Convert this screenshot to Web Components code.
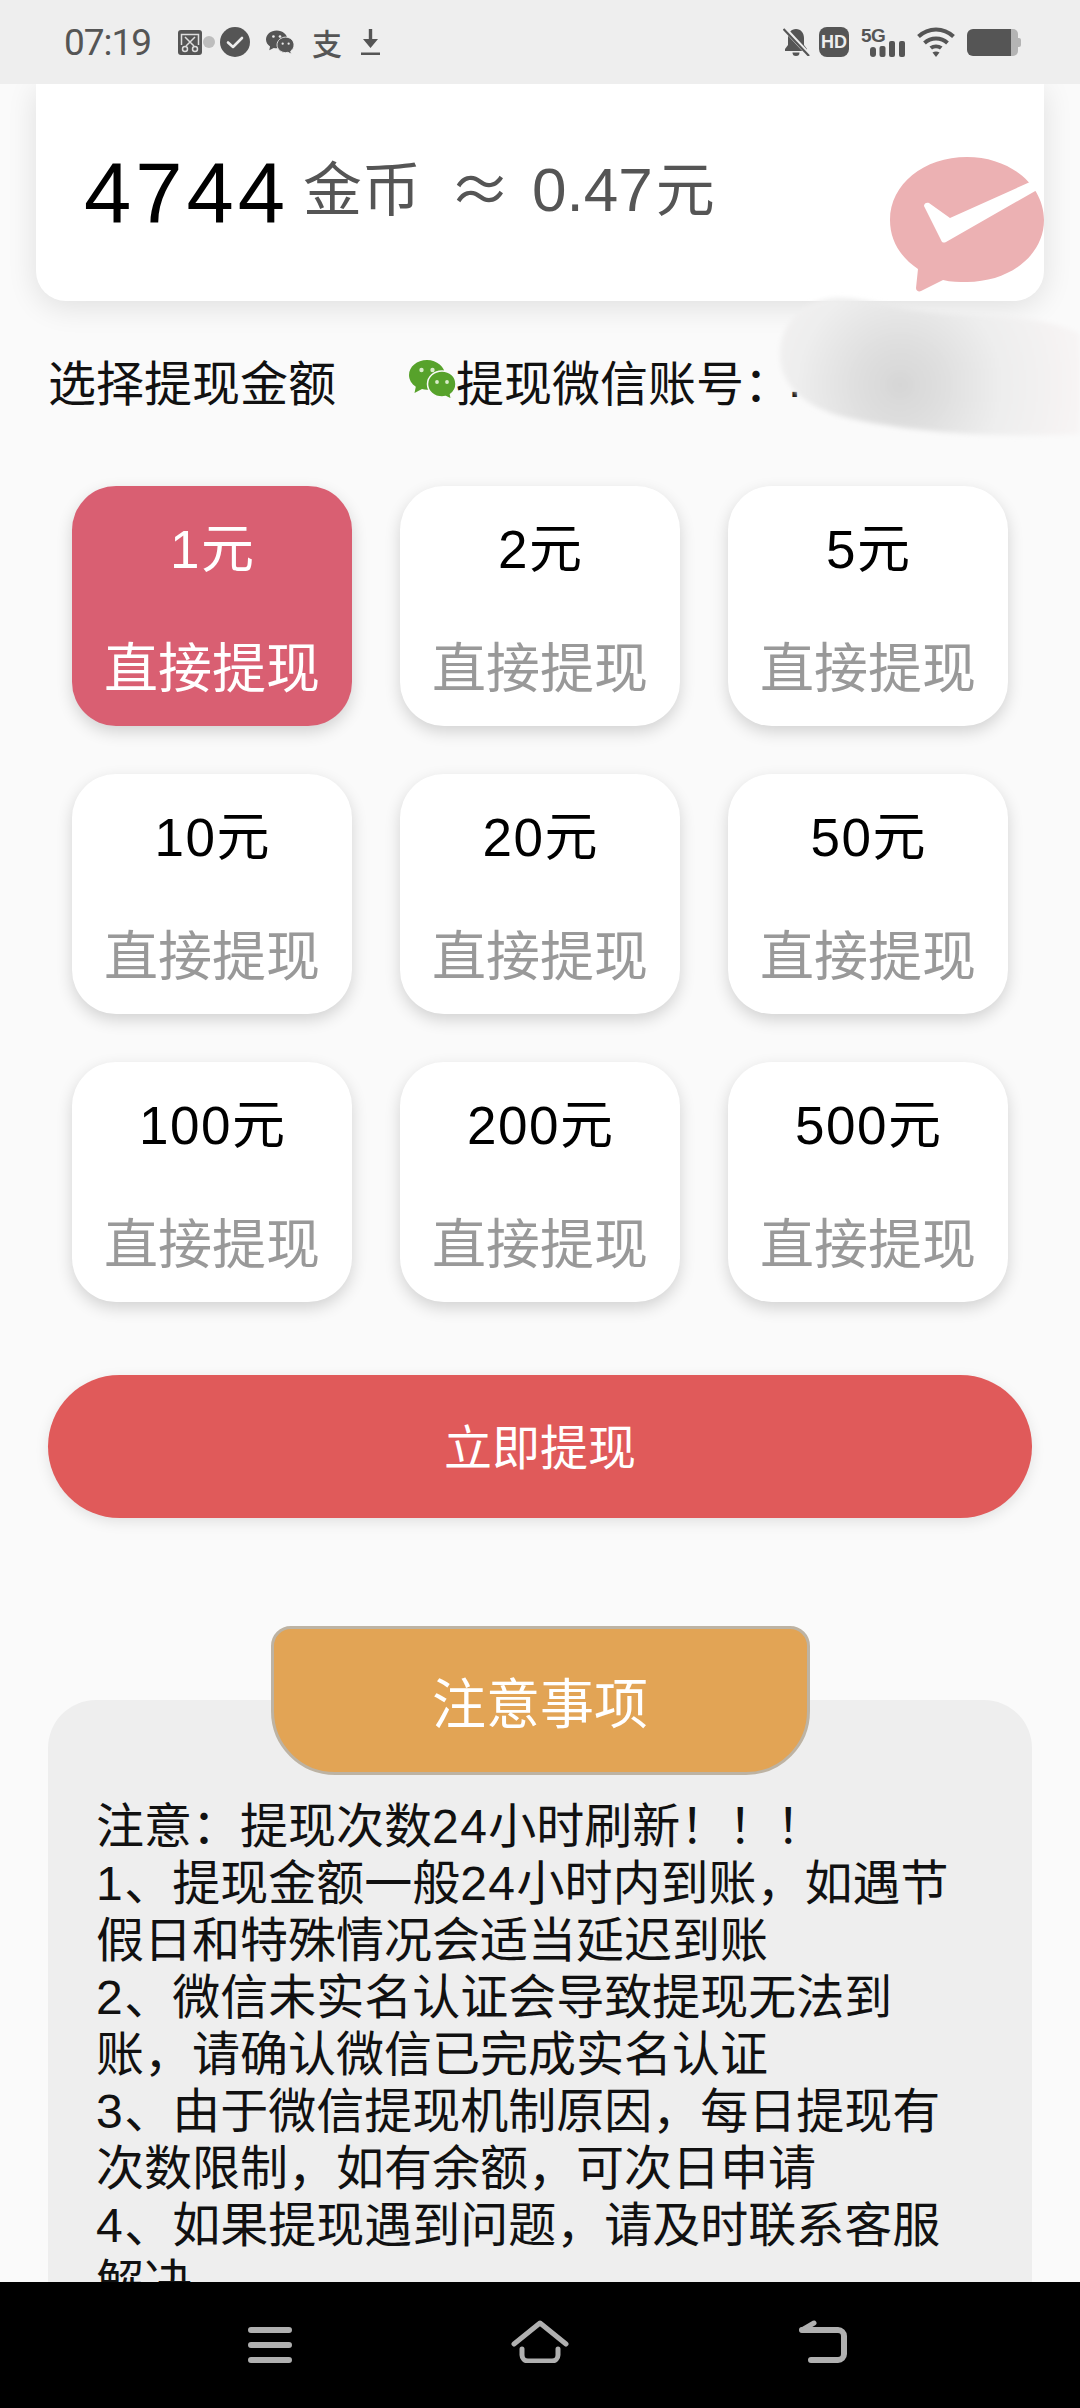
<!DOCTYPE html>
<html lang="zh-CN">
<head>
<meta charset="utf-8">
<title>提现</title>
<style>
  html, body { margin: 0; height: 100%; background: #fafafa; }
  body { font-family: "Noto Sans CJK SC", "Liberation Sans", sans-serif; text-autospace: no-autospace; }
</style>
</head>
<body>
<withdraw-page>
  <status-bar slot="status"></status-bar>

  <balance-card>
    <x-num class="coins">4744</x-num>
  </balance-card>

  <account-row>
    <span slot="left">选择提现金额</span>
    <span slot="right">提现微信账号：</span>
  </account-row>

  <amount-grid>
    <amount-card selected><x-num>1</x-num>元</amount-card>
    <amount-card><x-num>2</x-num>元</amount-card>
    <amount-card><x-num>5</x-num>元</amount-card>
    <amount-card><x-num>10</x-num>元</amount-card>
    <amount-card><x-num>20</x-num>元</amount-card>
    <amount-card><x-num>50</x-num>元</amount-card>
    <amount-card><x-num>100</x-num>元</amount-card>
    <amount-card><x-num>200</x-num>元</amount-card>
    <amount-card><x-num>500</x-num>元</amount-card>
  </amount-grid>

  <withdraw-button>立即提现</withdraw-button>

  <notice-panel>
    <span slot="title">注意事项</span>
    注意：提现次数<x-num>24</x-num>小时刷新！！！<br>
    <x-num>1</x-num>、提现金额一般<x-num>24</x-num>小时内到账，如遇节假日和特殊情况会适当延迟到账<br>
    <x-num>2</x-num>、微信未实名认证会导致提现无法到账，请确认微信已完成实名认证<br>
    <x-num>3</x-num>、由于微信提现机制原因，每日提现有次数限制，如有余额，可次日申请<br>
    <x-num>4</x-num>、如果提现遇到问题，请及时联系客服解决
  </notice-panel>

  <nav-bar slot="nav"></nav-bar>
</withdraw-page>

<script>
// Digits in the reference run a little wider than Liberation Sans.
// line-height 0 stops the second font from stretching the CJK line boxes.
// No whitespace around the slot: this is an inline host, it would show as a space.
class XNum extends HTMLElement {
  constructor() {
    super();
    const shadow = this.attachShadow({ mode: "open" });
    shadow.innerHTML = `<style>
      :host {
        display: inline;
        font-family: "Liberation Sans", sans-serif;
        letter-spacing: 0.03em;
        line-height: 0;
      }
      </style><slot></slot>`;
  }
}
customElements.define("x-num", XNum);

class WechatIcon extends HTMLElement {
  constructor() {
    super();
    const shadow = this.attachShadow({ mode: "open" });
    shadow.innerHTML = `
      <style>
      :host { display: inline-flex; }
      svg { width: 100%; height: 100%; display: block; }
      </style>
      <svg viewBox="0 0 47 40">
        <path fill="currentColor" d="M18 0C8 0 0 6.700 0 15c0 4.800 2.700 9 6.800 11.700L5.500 33l7.500-3.900c1.600.4 3.300.6 5 .6C28 29.700 36 23 36 15S28 0 18 0z"/>
        <path fill="currentColor" stroke="var(--cut, #fafafa)" stroke-width="1.500" d="M33 11c-8 0-14.500 5.700-14.500 13S25 37 33 37c1.300 0 2.500-.2 3.700-.5l5.800 3-1-5.200c3.400-2.400 5.500-6 5.500-10.300 0-7.300-6-13-14-13z"/>
        <g fill="var(--eye, #d9ecc9)">
          <circle cx="12.500" cy="10" r="2.200"/><circle cx="23.500" cy="10" r="2.200"/>
          <circle cx="28" cy="22" r="1.900"/><circle cx="38" cy="22" r="1.900"/>
        </g>
      </svg>`;
  }
}
customElements.define("wechat-icon", WechatIcon);

class StatusBar extends HTMLElement {
  constructor() {
    super();
    const shadow = this.attachShadow({ mode: "open" });
    shadow.innerHTML = `
      <style>
      :host {
        display: flex;
        align-items: center;
        justify-content: space-between;
        height: 84px;
        padding: 0 59px 0 64px;
        box-sizing: border-box;
        background: #eeeeee;
        color: #555;
        position: relative;
        z-index: 2;
      }
      .group { display: flex; align-items: center; }
      .time {
        width: 88px;
        font: 37px/1 Roboto, sans-serif;
        letter-spacing: -1px;
        margin-right: 26px;
        white-space: nowrap;
      }
      svg { display: block; flex: none; }
      .dot { width: 12px; height: 12px; border-radius: 50%; background: #bdbdbd; margin: 0 5px 0 1px; }
      wechat-icon { width: 28px; height: 25px; margin-left: 16px; --cut: #eee; --eye: #eee; }
      .ali {
        width: 28px;
        margin-left: 18px;
        font: 500 30px/1 "Noto Sans CJK SC", sans-serif;
        text-align: center;
      }
      .down { margin-left: 21px; }
      .hd {
        width: 30px;
        height: 30px;
        margin-left: 9px;
        border-radius: 8px;
        background: #555;
        color: #eee;
        font: bold 18px/30px "Liberation Sans", sans-serif;
        text-align: center;
      }
      .net { width: 44px; height: 30px; margin-left: 12px; position: relative; }
      .net b { position: absolute; left: 0; top: -1px; font: bold 19px/19px "Liberation Sans", sans-serif; letter-spacing: -0.500px; }
      .net svg { position: absolute; left: 0; top: 0; }
      .wifi { margin-left: 12px; }
      .batt { margin-left: 12px; }
      </style>
      <div class="group">
        <span class="time">07:19</span>
        <svg width="24" height="25" viewBox="0 0 24 25">
          <rect width="24" height="25" rx="3" fill="#555"/>
          <path d="M3.500 15V4.500h17V15" fill="none" stroke="#ddd" stroke-width="1.500"/>
          <path d="M7 7l9 9M17 7l-9 9" fill="none" stroke="#ddd" stroke-width="1.500"/>
          <circle cx="7" cy="19" r="2.500" fill="none" stroke="#ddd" stroke-width="1.500"/>
          <circle cx="17" cy="19" r="2.500" fill="none" stroke="#ddd" stroke-width="1.500"/>
        </svg>
        <span class="dot"></span>
        <svg width="30" height="30" viewBox="0 0 30 30">
          <circle cx="15" cy="15" r="15" fill="#555"/>
          <path d="M8 15.500l5 4.500 9-9" fill="none" stroke="#eee" stroke-width="2.600" stroke-linecap="round" stroke-linejoin="round"/>
        </svg>
        <wechat-icon></wechat-icon>
        <span class="ali">支</span>
        <svg class="down" width="19" height="26" viewBox="0 0 19 26">
          <path d="M7.800 0h3.400v10H17l-7.500 9L2 10h5.800z" fill="#555"/>
          <rect y="23.500" width="19" height="2.500" fill="#555"/>
        </svg>
      </div>
      <div class="group">
        <svg width="27" height="28" viewBox="0 0 27 28">
          <path d="M13 1c-5 0-8 4-8 9v7l-3 4v2h22v-2l-3-4v-7c0-5-3-9-8-9z" fill="#555"/>
          <path d="M9.500 24.500h7a3.500 3.500 0 0 1-7 0z" fill="#555"/>
          <path d="M1 0l26 28" stroke="#eee" stroke-width="4.500"/>
          <path d="M0.500 1l25.500 27" stroke="#555" stroke-width="2.200"/>
        </svg>
        <span class="hd">HD</span>
        <div class="net">
          <b>5G</b>
          <svg width="44" height="30" viewBox="0 0 44 30">
            <rect x="9" y="20" width="6" height="10" rx="3" fill="#555"/>
            <rect x="18.500" y="19" width="6" height="11" rx="2" fill="#555"/>
            <rect x="28" y="14" width="6" height="16" rx="2" fill="#555"/>
            <rect x="38" y="14" width="6" height="16" rx="2" fill="#555"/>
          </svg>
        </div>
        <svg class="wifi" width="38" height="30" viewBox="0 0 38 30">
          <g fill="none" stroke="#555" stroke-width="4">
            <path d="M1.500 9.500C11.500 0 26.500 0 36.500 9.500"/>
            <path d="M7.500 16C14 10 24 10 30.500 16"/>
          </g>
          <path d="M12.500 19.500c4-2.800 9-2.800 13 0l-2.500 3c-2.600-1.600-5.400-1.600-8 0z" fill="#555"/>
          <path d="M15.500 25.500c2.200-1.200 4.800-1.200 7 0L19 30z" fill="#555"/>
        </svg>
        <svg class="batt" width="54" height="27" viewBox="0 0 54 27">
          <path d="M6 0h38v27H6a6 6 0 0 1-6-6V6a6 6 0 0 1 6-6z" fill="#555"/>
          <path d="M44 0h2a5 5 0 0 1 5 5v17a5 5 0 0 1-5 5h-2z" fill="#b4b4b4"/>
          <path d="M51 9h1a2 2 0 0 1 2 2v5a2 2 0 0 1-2 2h-1z" fill="#b4b4b4"/>
        </svg>
      </div>`;
  }
}
customElements.define("status-bar", StatusBar);

class BalanceCard extends HTMLElement {
  constructor() {
    super();
    const shadow = this.attachShadow({ mode: "open" });
    shadow.innerHTML = `
      <style>
      :host {
        display: flex;
        align-items: center;
        position: relative;
        height: 217px;
        margin: 0 36px;
        padding-left: 48px;
        background: #fff;
        border-radius: 0 0 30px 30px;
        box-shadow: 0 6px 30px rgba(0,0,0,0.11);
        color: #555;
      }
      ::slotted(x-num) {
        font-size: 85px;
        line-height: 1;
        color: #000;
        letter-spacing: 4px;
      }
      .unit, .approx, .money { margin-bottom: 13px; line-height: 1.2; }
      .unit { font-size: 59px; margin-left: 14px; }
      .approx { font-size: 62px; width: 56px; margin-left: 28px; margin-right: 27px; text-align: center; }
      .money { font-size: 59px; white-space: nowrap; }
      .money x-num { font-size: 62px; letter-spacing: 0; margin-right: 3px; }
      .mark { position: absolute; right: 0; top: 68px; }
      </style>
      <slot></slot>
      <span class="unit">金币</span>
      <span class="approx">≈</span>
      <span class="money"><x-num>0.47</x-num>元</span>
      <svg class="mark" width="154" height="140" viewBox="0 0 154 140">
        <path fill="#ecb1b3" d="M77 5C34 5 0 32 0 68c0 20 10 37 28 49l-2 19c0 3 3 4 5 3l22-11c8 2 16 2 24 2 43 0 77-27 77-62S120 5 77 5z"/>
        <path fill="#fff" d="M34 54c0-3 3-4 5-3l21 15 80-36 7 8-91 52c-2 1-4 1-5-2z"/>
      </svg>`;
  }
}
customElements.define("balance-card", BalanceCard);

class AccountRow extends HTMLElement {
  constructor() {
    super();
    const shadow = this.attachShadow({ mode: "open" });
    shadow.innerHTML = `
      <style>
      :host {
        display: flex;
        align-items: center;
        position: relative;
        height: 60px;
        margin-top: 49px;
        padding-left: 48px;
        font-size: 48px;
        line-height: 60px;
        color: #111;
        white-space: nowrap;
      }
      wechat-icon { width: 47px; height: 40px; margin: 0 0 0 73px; color: #57a22b; }
      .tail { font: 48px "Liberation Sans", sans-serif; margin-left: -4px; }
      .blur { position: absolute; left: 750px; top: -60px; pointer-events: none; }
      </style>
      <slot name="left"></slot>
      <wechat-icon></wechat-icon>
      <slot name="right"></slot>
      <span class="tail">.</span>
      <svg class="blur" width="330" height="165" viewBox="0 0 330 165">
        <defs>
          <radialGradient id="smear" gradientUnits="userSpaceOnUse" cx="150" cy="95" r="190">
            <stop offset="0" stop-color="#d6d6d6"/>
            <stop offset="0.3" stop-color="#e2e2e2"/>
            <stop offset="0.55" stop-color="#eeeeee"/>
            <stop offset="1" stop-color="#f8f5f5"/>
          </radialGradient>
          <filter id="soft" x="-10%" y="-20%" width="120%" height="140%">
            <feGaussianBlur stdDeviation="2.500"/>
          </filter>
        </defs>
        <path filter="url(#soft)" fill="url(#smear)" d="M30 60C32 28 60 8 88 8c30 0 60 14 120 16 50 2 90 4 122 20v100c-70 4-170 0-240-18C50 114 28 92 30 60z"/>
      </svg>`;
  }
}
customElements.define("account-row", AccountRow);

class AmountGrid extends HTMLElement {
  constructor() {
    super();
    const shadow = this.attachShadow({ mode: "open" });
    shadow.innerHTML = `
      <style>
      :host {
        display: grid;
        grid-template-columns: repeat(3, 280px);
        grid-auto-rows: 240px;
        gap: 48px;
        margin-top: 76px;
        padding: 0 72px;
      }
      </style>
      <slot></slot>`;
  }
}
customElements.define("amount-grid", AmountGrid);

class AmountCard extends HTMLElement {
  constructor() {
    super();
    const shadow = this.attachShadow({ mode: "open" });
    shadow.innerHTML = `
      <style>
      :host {
        display: flex;
        flex-direction: column;
        align-items: center;
        justify-content: space-between;
        padding: 29px 0 31px;
        box-sizing: border-box;
        background: #fff;
        border-radius: 44px;
        box-shadow: 0 6px 16px rgba(0,0,0,0.16);
        color: #000;
        font-size: 53px;
        line-height: 60px;
      }
      :host([selected]) { background: #d95f72; color: #fff; }
      .sub { font-size: 54px; color: #999; }
      :host([selected]) .sub { color: #fff; }
      </style>
      <div><slot></slot></div>
      <div class="sub">直接提现</div>`;
  }
}
customElements.define("amount-card", AmountCard);

class WithdrawButton extends HTMLElement {
  constructor() {
    super();
    const shadow = this.attachShadow({ mode: "open" });
    shadow.innerHTML = `
      <style>
      :host {
        display: flex;
        align-items: center;
        justify-content: center;
        height: 143px;
        margin: 73px 48px 0;
        padding-bottom: 6px;
        box-sizing: border-box;
        border-radius: 72px;
        background: #e05a5a;
        box-shadow: 0 4px 14px rgba(0,0,0,0.1);
        color: #fff;
        font-size: 48px;
      }
      </style>
      <slot></slot>`;
  }
}
customElements.define("withdraw-button", WithdrawButton);

class NoticePanel extends HTMLElement {
  constructor() {
    super();
    const shadow = this.attachShadow({ mode: "open" });
    shadow.innerHTML = `
      <style>
      :host { display: block; margin: 108px 48px 0; }
      .title {
        position: relative;
        z-index: 1;
        display: flex;
        align-items: center;
        justify-content: center;
        box-sizing: border-box;
        width: 539px;
        height: 149px;
        margin: 0 auto -75px;
        background: #e2a455;
        border: 3px solid #bdb3a3;
        border-radius: 20px 20px 64px 64px;
        color: #fff;
        font-size: 54px;
      }
      .body {
        padding: 94px 50px 60px 48px;
        background: #eeeeee;
        border-radius: 48px;
        color: #111;
        font-size: 48px;
        line-height: 57px;
      }
      </style>
      <div class="title"><slot name="title"></slot></div>
      <div class="body"><slot></slot></div>`;
  }
}
customElements.define("notice-panel", NoticePanel);

class NavBar extends HTMLElement {
  constructor() {
    super();
    const shadow = this.attachShadow({ mode: "open" });
    shadow.innerHTML = `
      <style>
      :host {
        display: flex;
        align-items: flex-start;
        gap: 219px;
        height: 126px;
        padding: 38px 0 0 248px;
        box-sizing: border-box;
        background: #000;
        position: relative;
        z-index: 2;
      }
      svg { display: block; flex: none; }
      svg:last-child { margin-left: 11px; }
      </style>
      <svg width="44" height="43" viewBox="0 0 44 43" fill="none" stroke="#b0b0b0" stroke-width="6" stroke-linecap="round">
        <path d="M3 10h38M3 25h38M3 40h38"/>
      </svg>
      <svg width="58" height="43" viewBox="0 0 58 43" fill="none" stroke="#b0b0b0" stroke-width="5" stroke-linecap="round" stroke-linejoin="round">
        <path d="M3 24L29 3l26 21"/>
        <path d="M11 29v6a6 6 0 0 0 6 6h24a6 6 0 0 0 6-6v-6"/>
      </svg>
      <svg width="48" height="43" viewBox="0 0 48 43" fill="none" stroke="#b0b0b0" stroke-width="6" stroke-linecap="round" stroke-linejoin="round">
        <path d="M3 10h36a6 6 0 0 1 6 6v18a6 6 0 0 1-6 6H12"/>
        <path d="M3 10l12-7" stroke-width="5"/>
      </svg>`;
  }
}
customElements.define("nav-bar", NavBar);

class WithdrawPage extends HTMLElement {
  constructor() {
    super();
    const shadow = this.attachShadow({ mode: "open" });
    shadow.innerHTML = `
      <style>
      :host {
        display: flex;
        flex-direction: column;
        height: 2408px;
        overflow: hidden;
        background: #fafafa;
      }
      main { flex: 1; min-height: 0; overflow: hidden; }
      </style>
      <slot name="status"></slot>
      <main><slot></slot></main>
      <slot name="nav"></slot>`;
  }
}
customElements.define("withdraw-page", WithdrawPage);
</script>
</body>
</html>
